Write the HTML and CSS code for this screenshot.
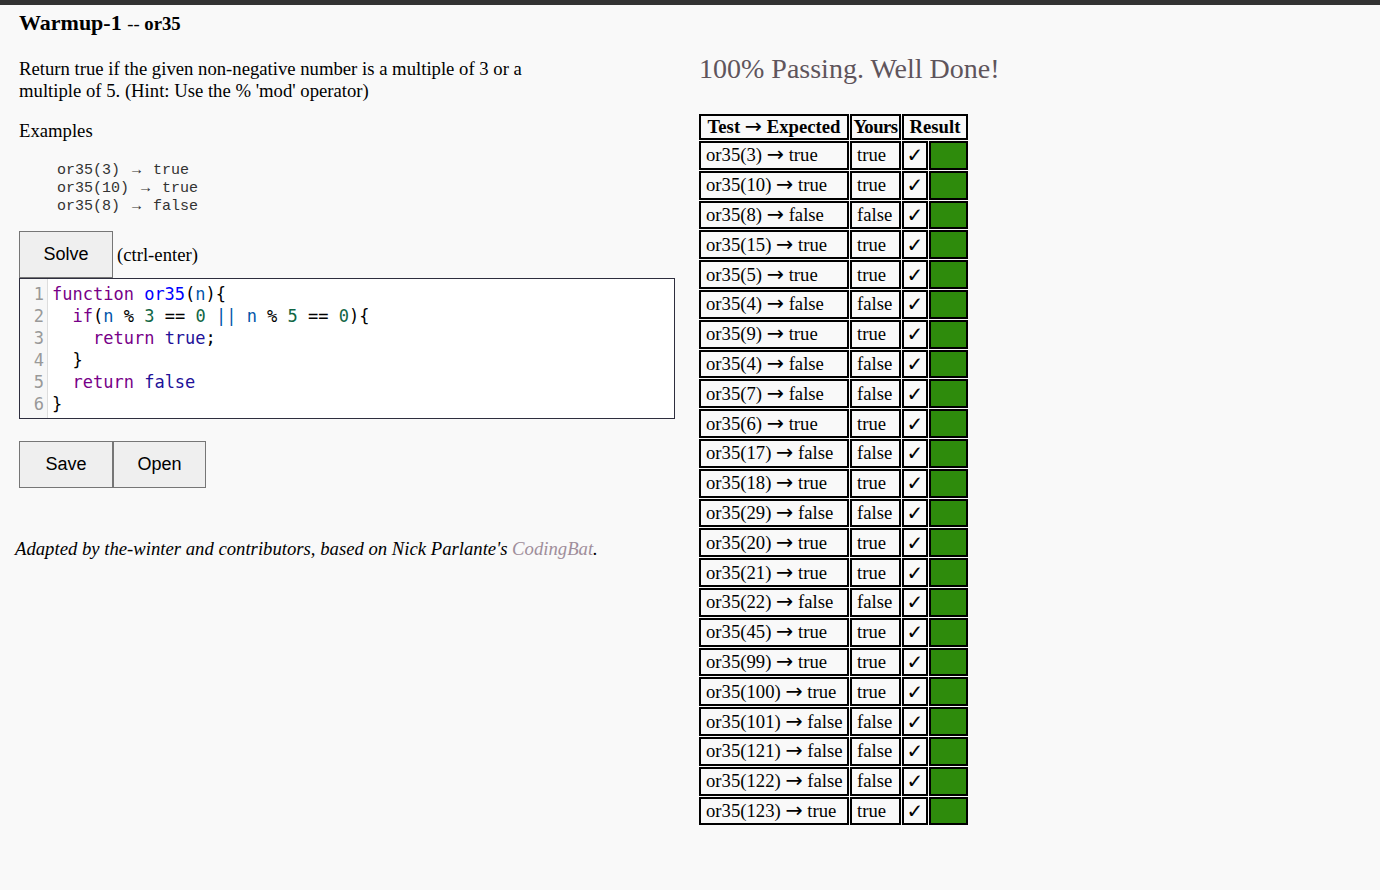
FILE: index.html
```html
<!DOCTYPE html>
<html lang="en">
<head>
<meta charset="utf-8">
<title>Warmup-1 -- or35</title>
<link rel="stylesheet" href="styles.css">
</head>
<body>
<div class="topbar"></div>
<div class="page">
  <div class="left">
    <h1 class="title">Warmup-1 <span class="sub"><span class="dash">--</span> or35</span></h1>
    <p class="desc">Return true if the given non-negative number is a multiple of 3 or a multiple of 5. (Hint: Use the % 'mod' operator)</p>
    <p class="examples-label">Examples</p>
    <pre class="examples">or35(3) <span class="marr">→</span> true
or35(10) <span class="marr">→</span> true
or35(8) <span class="marr">→</span> false</pre>
    <div class="solve-row">
      <button class="btn">Solve</button>
      <span class="hint">(ctrl-enter)</span>
    </div>
    <div class="editor">
      <div class="gutter">
        <div>1</div><div>2</div><div>3</div><div>4</div><div>5</div><div>6</div>
      </div>
      <pre class="code"><span class="kw">function</span> <span class="def">or35</span>(<span class="var">n</span>){
  <span class="kw">if</span>(<span class="var">n</span> % <span class="num">3</span> == <span class="num">0</span> <span class="op">||</span> <span class="var">n</span> % <span class="num">5</span> == <span class="num">0</span>){
    <span class="kw">return</span> <span class="atom">true</span>;
  }
  <span class="kw">return</span> <span class="atom">false</span>
}</pre>
    </div>
    <div class="file-row">
      <button class="btn">Save</button><button class="btn btn-open">Open</button>
    </div>
    <p class="footer">Adapted by the-winter and contributors, based on Nick Parlante's <a href="#" class="link">CodingBat</a>.</p>
  </div>
  <div class="right">
    <h2 class="status">100% Passing. Well Done!</h2>
    <table class="results">
      <thead>
        <tr><th class="c1">Test <span class="arr">→</span> Expected</th><th class="c2">Yours</th><th colspan="2">Result</th></tr>
      </thead>
      <tbody>
        <tr><td>or35(3) <span class="arr">→</span> true</td><td>true</td><td class="chk">✓</td><td class="ok"></td></tr>
        <tr><td>or35(10) <span class="arr">→</span> true</td><td>true</td><td class="chk">✓</td><td class="ok"></td></tr>
        <tr><td>or35(8) <span class="arr">→</span> false</td><td>false</td><td class="chk">✓</td><td class="ok"></td></tr>
        <tr><td>or35(15) <span class="arr">→</span> true</td><td>true</td><td class="chk">✓</td><td class="ok"></td></tr>
        <tr><td>or35(5) <span class="arr">→</span> true</td><td>true</td><td class="chk">✓</td><td class="ok"></td></tr>
        <tr><td>or35(4) <span class="arr">→</span> false</td><td>false</td><td class="chk">✓</td><td class="ok"></td></tr>
        <tr><td>or35(9) <span class="arr">→</span> true</td><td>true</td><td class="chk">✓</td><td class="ok"></td></tr>
        <tr><td>or35(4) <span class="arr">→</span> false</td><td>false</td><td class="chk">✓</td><td class="ok"></td></tr>
        <tr><td>or35(7) <span class="arr">→</span> false</td><td>false</td><td class="chk">✓</td><td class="ok"></td></tr>
        <tr><td>or35(6) <span class="arr">→</span> true</td><td>true</td><td class="chk">✓</td><td class="ok"></td></tr>
        <tr><td>or35(17) <span class="arr">→</span> false</td><td>false</td><td class="chk">✓</td><td class="ok"></td></tr>
        <tr><td>or35(18) <span class="arr">→</span> true</td><td>true</td><td class="chk">✓</td><td class="ok"></td></tr>
        <tr><td>or35(29) <span class="arr">→</span> false</td><td>false</td><td class="chk">✓</td><td class="ok"></td></tr>
        <tr><td>or35(20) <span class="arr">→</span> true</td><td>true</td><td class="chk">✓</td><td class="ok"></td></tr>
        <tr><td>or35(21) <span class="arr">→</span> true</td><td>true</td><td class="chk">✓</td><td class="ok"></td></tr>
        <tr><td>or35(22) <span class="arr">→</span> false</td><td>false</td><td class="chk">✓</td><td class="ok"></td></tr>
        <tr><td>or35(45) <span class="arr">→</span> true</td><td>true</td><td class="chk">✓</td><td class="ok"></td></tr>
        <tr><td>or35(99) <span class="arr">→</span> true</td><td>true</td><td class="chk">✓</td><td class="ok"></td></tr>
        <tr><td>or35(100) <span class="arr">→</span> true</td><td>true</td><td class="chk">✓</td><td class="ok"></td></tr>
        <tr><td>or35(101) <span class="arr">→</span> false</td><td>false</td><td class="chk">✓</td><td class="ok"></td></tr>
        <tr><td>or35(121) <span class="arr">→</span> false</td><td>false</td><td class="chk">✓</td><td class="ok"></td></tr>
        <tr><td>or35(122) <span class="arr">→</span> false</td><td>false</td><td class="chk">✓</td><td class="ok"></td></tr>
        <tr><td>or35(123) <span class="arr">→</span> true</td><td>true</td><td class="chk">✓</td><td class="ok"></td></tr>
      </tbody>
    </table>
  </div>
</div>
</body>
</html>
```

FILE: styles.css
```css
html, body {
  margin: 0;
  padding: 0;
  background: #f9f9f9;
}
body {
  font-family: "Liberation Serif", "Times New Roman", serif;
  font-size: 18.7px;
  line-height: 1.18;
  color: #000;
}
.topbar {
  height: 5px;
  background: #333333;
}
.page {
  display: flex;
  align-items: flex-start;
  padding-left: 15px;
}
.left {
  width: 661px;
  flex: none;
}
.left > .title,
.left > .desc,
.left > .examples-label,
.left > .examples,
.left > .solve-row,
.left > .editor,
.left > .file-row {
  margin-left: 4px;
}
.title {
  font-size: 22px;
  font-weight: bold;
  margin-top: 5px;
  margin-bottom: 0;
  line-height: 26px;
}
.sub {
  font-size: 18.7px;
}
.dash {
  font-weight: normal;
}
.desc {
  width: 545px;
  margin-top: 21px;
  margin-bottom: 0;
}
.examples-label {
  margin: 18px 0 0;
}
.examples {
  margin: 20px 0 0;
  padding-left: 38px;
  font-family: "Liberation Mono", "Courier New", monospace;
  font-size: 15px;
  line-height: 18px;
  color: #333;
}
.marr {
  display: inline-block;
  width: 15px;
  text-align: center;
}
.solve-row {
  margin-top: 15px;
  display: flex;
  align-items: center;
  gap: 4px;
}
.btn {
  width: 94px;
  height: 47px;
  font-family: "Liberation Sans", Arial, sans-serif;
  font-size: 18px;
  color: #000;
  background: #efefef;
  border: 1px solid #767676;
  border-radius: 0;
  padding: 0;
  margin: 0;
}
.btn-open {
  width: 93px;
}
.hint {
  font-size: 18.7px;
}
.editor {
  width: 654px;
  display: flex;
  background: #fff;
  border: 1px solid #2e2e3e;
}
.gutter {
  width: 24px;
  padding: 4px 3px 3px 0;
  text-align: right;
  border-right: 1px solid #ddd;
  background: #f7f7f7;
  color: #999;
  font-family: "DejaVu Sans Mono", monospace;
  font-size: 17px;
  line-height: 22px;
}
.code {
  margin: 0;
  padding: 4px 4px 3px;
  font-family: "DejaVu Sans Mono", monospace;
  font-size: 17px;
  line-height: 22px;
  color: #000;
}
.kw { color: #708; }
.def { color: #00f; }
.var { color: #05a; }
.num { color: #164; }
.atom { color: #219; }
.op { color: #05a; }
.file-row {
  margin-top: 22px;
  display: flex;
}
.footer {
  margin: 50px 0 0;
  font-style: italic;
}
.link {
  color: #a08e9b;
  text-decoration: none;
}
.right {
  margin-left: 22px;
}
.status {
  margin: 47px 0 0 1px;
  font-size: 28px;
  font-weight: normal;
  line-height: 34px;
  color: #5f555c;
}
.results {
  margin-top: 27px;
  border-collapse: separate;
  border-spacing: 1px;
  font-size: 18.7px;
}
.arr {
  font-family: "DejaVu Sans", sans-serif;
  font-size: 1.1em;
  font-weight: normal;
  line-height: 1;
}
.results th {
  border: 2px solid #000;
  padding: 0 2px;
  line-height: 22px;
  font-weight: bold;
  text-align: center;
}
.results th.c1 {
  width: 142px;
}
.results th.c2 {
  width: 47px;
  padding: 0;
  letter-spacing: -0.5px;
}
.results td {
  border: 2px solid #000;
  padding: 0 2px 0 5px;
  height: 24.8px;
  line-height: 22px;
  text-align: left;
  vertical-align: middle;
  white-space: nowrap;
}
.results td:nth-child(2) {
  padding-right: 0;
}
.results td.chk {
  width: 22px;
  padding: 0;
  font-family: "DejaVu Sans", sans-serif;
  font-weight: bold;
  text-align: center;
  font-size: 20px;
}
.results td.ok {
  width: 35px;
  padding: 0;
  background: #2e8b0c;
}
```
